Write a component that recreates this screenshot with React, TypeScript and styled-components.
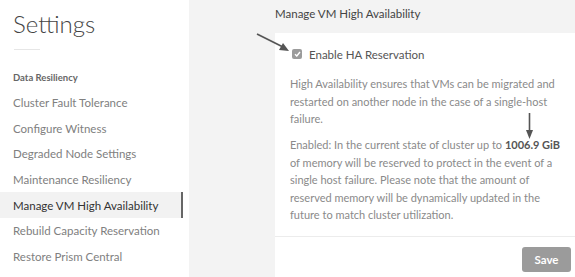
import React from "react";
import { styled, createGlobalStyle } from "styled-components";

const Global = createGlobalStyle`
  html, body {
    margin: 0;
    padding: 0;
  }
  body {
    font-family: Lato, "Noto Sans", "DejaVu Sans", sans-serif;
    background: #ffffff;
  }
`;

const Page = styled.div`
  display: flex;
  width: 575px;
  height: 277px;
  overflow: hidden;
  position: relative;
`;

const Sidebar = styled.div`
  width: 189px;
  flex-shrink: 0;
  background: #ffffff;
  display: flex;
  flex-direction: column;
`;

const Title = styled.div`
  font-size: 24px;
  font-weight: 300;
  color: #444;
  padding: 9px 0 0 13px;
  line-height: 30px;
`;

const TitleRule = styled.div`
  width: 26px;
  height: 1px;
  background: #e6e6e6;
  margin: 10px 0 0 14px;
`;

const GroupLabel = styled.div`
  font-size: 9.5px;
  font-weight: 700;
  color: #666;
  padding: 0 0 0 13px;
  margin-top: 22px;
  line-height: 12px;
`;

const NavList = styled.div`
  display: flex;
  flex-direction: column;
  margin-top: 6px;
`;

const NavItem = styled.div<{ $active?: boolean }>`
  height: 25.6px;
  display: flex;
  align-items: center;
  padding-left: 13px;
  margin-right: 6px;
  font-size: 11.5px;
  color: ${(p) => (p.$active ? "#333" : "#808080")};
  background: ${(p) => (p.$active ? "#f2f2f2" : "transparent")};
  border-right: 2px solid ${(p) => (p.$active ? "#666" : "transparent")};
`;

const Main = styled.div`
  flex: 1;
  background: #f3f3f3;
  display: flex;
  flex-direction: column;
  padding-left: 86px;
`;

const Heading = styled.div`
  font-size: 11.5px;
  color: #444;
  line-height: 14px;
  padding-top: 7px;
  height: 26px;
`;

const Card = styled.div`
  flex: 1;
  background: #ffffff;
  display: flex;
  flex-direction: column;
`;

const Body = styled.div`
  padding: 13px 12px 0 15px;
`;

const CheckRow = styled.label`
  display: flex;
  align-items: center;
  gap: 7px;
  height: 16px;
  font-size: 11.5px;
  color: #555;
`;

const Box = styled.span`
  width: 10px;
  height: 10px;
  border-radius: 2px;
  background: #9b9b9b;
  display: flex;
  align-items: center;
  justify-content: center;
  margin-left: 2px;
`;

const Para = styled.p`
  margin: 13px 0 0;
  font-size: 11px;
  line-height: 17.5px;
  color: #8a8a8a;
  & + & {
    margin-top: 8.5px;
  }
  b {
    color: #555;
    font-weight: 700;
  }
`;

const Footer = styled.div`
  margin-top: 12px;
  border-top: 1px solid #ececec;
  display: flex;
  justify-content: flex-end;
  padding: 10px 4px 0 0;
`;

const SaveButton = styled.button`
  width: 49px;
  height: 25px;
  border: none;
  border-radius: 3px;
  background: #9b9b9b;
  color: #fff;
  font-family: inherit;
  font-weight: 700;
  font-size: 11.5px;
`;

const Arrow = styled.svg`
  position: absolute;
  overflow: visible;
`;

const items = [
  "Cluster Fault Tolerance",
  "Configure Witness",
  "Degraded Node Settings",
  "Maintenance Resiliency",
  "Manage VM High Availability",
  "Rebuild Capacity Reservation",
  "Restore Prism Central",
];

export default function App() {
  return (
    <>
      <Global />
      <Page>
        <Sidebar>
          <Title>Settings</Title>
          <TitleRule />
          <GroupLabel>Data Resiliency</GroupLabel>
          <NavList>
            {items.map((it) => (
              <NavItem key={it} $active={it === "Manage VM High Availability"}>
                {it}
              </NavItem>
            ))}
          </NavList>
        </Sidebar>
        <Main>
          <Heading>Manage VM High Availability</Heading>
          <Card>
            <Body>
              <CheckRow>
                <Box>
                  <svg width="7" height="6" viewBox="0 0 7 6">
                    <path d="M1 3.2 L2.8 5 L6 1" fill="none" stroke="#fff" strokeWidth="1.4" />
                  </svg>
                </Box>
                Enable HA Reservation
              </CheckRow>
              <Para>
                High Availability ensures that VMs can be migrated and restarted on another node in
                the case of a single-host failure.
              </Para>
              <Para>
                Enabled: In the current state of cluster up to <b>1006.9 GiB</b> of memory will be
                reserved to protect in the event of a single host failure. Please note that the
                amount of reserved memory will be dynamically updated in the future to match cluster
                utilization.
              </Para>
            </Body>
            <Footer>
              <SaveButton>Save</SaveButton>
            </Footer>
          </Card>
        </Main>
        <Arrow style={{ left: 256, top: 33 }} width="34" height="19">
          <line x1="1" y1="1" x2="27" y2="14" stroke="#555" strokeWidth="1.6" />
          <polygon points="33,18 23,17 27,10" fill="#555" />
        </Arrow>
        <Arrow style={{ left: 525, top: 113 }} width="9" height="27">
          <line x1="4.5" y1="0" x2="4.5" y2="19" stroke="#555" strokeWidth="1.6" />
          <polygon points="1,17 8,17 4.5,26" fill="#555" />
        </Arrow>
      </Page>
    </>
  );
}
